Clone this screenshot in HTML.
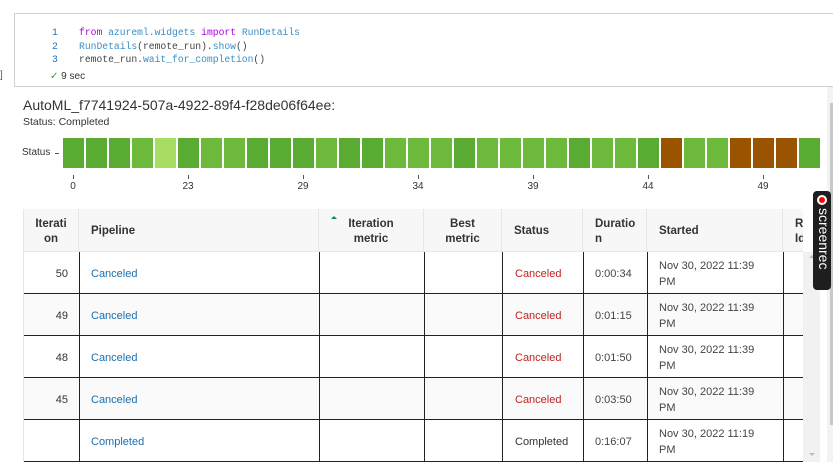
<!DOCTYPE html>
<html><head><meta charset="utf-8"><style>
*{margin:0;padding:0;box-sizing:border-box}
body{width:833px;height:462px;overflow:hidden;background:#fff;font-family:"Liberation Sans",sans-serif;position:relative;color:#333}
.a{position:absolute}
.code{font-family:"Liberation Mono",monospace;font-size:9.7px;color:#444;white-space:pre}
.ln{color:#1a73c0}
.kw{color:#af00db}
.fn{color:#3b8fc4}
.bar{position:absolute;top:138px;width:20.5px;height:30px}
.d{background:#5aab32}.m{background:#6db93c}.l{background:#a8dd64}.b{background:#9a5400}
.tk{position:absolute;top:175px;width:1px;height:4px;background:#555}
.tl{position:absolute;top:181px;font-size:10px;color:#333;width:30px;text-align:center}
.hd{position:absolute;top:209px;height:43px;padding-top:3px;background:#f7f7f7;border-right:1px solid #e6e6e6;border-bottom:1px solid #e6e6e6;font-size:11.5px;font-weight:bold;color:#333;display:flex;align-items:center;line-height:15px}
.cell{position:absolute;font-size:11px;height:42px;padding-top:2px;display:flex;align-items:center;line-height:16px}
.lk{color:#1a6fb0}.rd{color:#c0221f}
</style></head><body>
<div class="a" style="left:14px;top:13px;width:819px;height:74px;border-top:1px solid #d0d0d0;border-bottom:1px solid #d0d0d0;border-left:1px solid #d0d0d0"></div>
<div class="a" style="left:0;top:70px;font-size:10px;color:#555">]</div>
<div class="a code" style="left:52px;top:26px;line-height:13.5px"><span class="ln">1</span>
<span class="ln">2</span>
<span class="ln">3</span></div>
<div class="a code" style="left:79px;top:26px;line-height:13.5px"><span class="kw">from</span> <span class="fn">azureml.widgets</span> <span class="kw">import</span> <span class="fn">RunDetails</span>
<span class="fn">RunDetails</span>(remote_run).<span class="fn">show</span>()
remote_run.<span class="fn">wait_for_completion</span>()</div>
<div class="a" style="left:50px;top:71px;font-size:10px;color:#333"><span style="color:#2e9d3a">✓</span> 9 sec</div>
<div class="a" style="left:23px;top:97px;font-size:14px;color:#333">AutoML_f7741924-507a-4922-89f4-f28de06f64ee:</div>
<div class="a" style="left:23px;top:116px;font-size:10.5px;color:#333">Status: Completed</div>
<div class="a" style="left:22px;top:147px;font-size:10px;color:#333">Status</div>
<div class="a" style="left:55px;top:153px;width:4px;height:1px;background:#555"></div>
<div id="bars"></div>
<div class="a" style="left:23px;top:209px;width:780px;height:253px;background:#fff"></div>
<div class="hd" style="left:23px;width:56px;justify-content:center;text-align:center;border-left:1px solid #e6e6e6">Iterati<br>on</div>
<div class="hd" style="left:79px;width:240px;padding-left:12px">Pipeline</div>
<div class="hd" style="left:319px;width:105px;justify-content:center;text-align:center">Iteration<br>metric</div>
<div class="a" style="left:331px;top:216px;width:0;height:0;border-left:3px solid transparent;border-right:3px solid transparent;border-bottom:3px solid #138a5c"></div>
<div class="hd" style="left:424px;width:78px;justify-content:center;text-align:center">Best<br>metric</div>
<div class="hd" style="left:502px;width:81px;padding-left:12px">Status</div>
<div class="hd" style="left:583px;width:64px;padding-left:12px">Duratio<br>n</div>
<div class="hd" style="left:647px;width:136px;padding-left:12px">Started</div>
<div class="hd" style="left:783px;width:20px;padding-left:12px;overflow:hidden;border-right:none;white-space:nowrap">R<br>Id</div>
<div id="rows"></div>
<div class="a" style="left:803px;top:252px;width:17px;height:210px;background:#f1f1f1"></div>
<div class="a" style="left:809px;top:255px;width:0;height:0;border-left:3px solid transparent;border-right:3px solid transparent;border-bottom:3px solid #bbb"></div>
<div class="a" style="left:809px;top:453px;width:0;height:0;border-left:3px solid transparent;border-right:3px solid transparent;border-top:3px solid #bbb"></div>
<div class="a" style="left:827px;top:87px;width:6px;height:375px;background:#f3f3f3"></div>
<div class="a" style="left:830px;top:103px;width:3px;height:322px;background:#c8c8c8"></div>
<div class="a" style="left:813px;top:191px;width:18px;height:99px;background:#1e1e1e;border-radius:4px"></div>
<div class="a" style="left:817px;top:195px;width:10px;height:10px;background:#f00;border-radius:50%;border:2px solid #fff"></div>
<div class="a" style="top:208px;transform:rotate(90deg);transform-origin:0 0;color:#fff;font-size:14px;white-space:nowrap;line-height:1;left:831px">screenrec</div>
<script>
var c="d d d m l d m m d d d m d d m m m d m m m m d m m d b m m b b b d".split(" ");
var h="";
for(var i=0;i<33;i++){h+='<div class="bar '+c[i]+'" style="left:'+(63+i*23).toFixed(1)+'px"></div>';}
var lb=["0","23","29","34","39","44","49"];
for(var j=0;j<7;j++){var x=73+j*5*23;h+='<div class="tk" style="left:'+x.toFixed(0)+'px"></div><div class="tl" style="left:'+(x-15).toFixed(0)+'px">'+lb[j]+'</div>';}
document.getElementById("bars").innerHTML=h;
var r=[["50","Canceled","Canceled","0:00:34","Nov 30, 2022 11:39"],["49","Canceled","Canceled","0:01:15","Nov 30, 2022 11:39"],["48","Canceled","Canceled","0:01:50","Nov 30, 2022 11:39"],["45","Canceled","Canceled","0:03:50","Nov 30, 2022 11:39"],["","Completed","Completed","0:16:07","Nov 30, 2022 11:19"]];
var s="";
for(var k=0;k<5;k++){var y=252+k*42;var bg=(k%2==1)?"#fafafa":"#fff";
s+='<div class="a" style="left:23px;top:'+y+'px;width:780px;height:42px;background:'+bg+';border-bottom:1px solid #222"></div>';
s+='<div class="cell" style="left:23px;top:'+y+'px;width:45px;justify-content:flex-end">'+r[k][0]+'</div>';
s+='<div class="cell lk" style="left:91px;top:'+y+'px">'+r[k][1]+'</div>';
s+='<div class="cell '+(r[k][2]=="Canceled"?"rd":"")+'" style="left:515px;top:'+y+'px">'+r[k][2]+'</div>';
s+='<div class="cell" style="left:595px;top:'+y+'px;color:#444">'+r[k][3]+'</div>';
s+='<div class="cell" style="left:659px;top:'+y+'px;color:#444">'+r[k][4]+'<br>PM</div>';}
[79,319,424,502,583,647,783].forEach(function(x){s+='<div class="a" style="left:'+x+'px;top:252px;width:1px;height:210px;background:#222"></div>';});
s+='<div class="a" style="left:23px;top:252px;width:1px;height:210px;background:#e6e6e6"></div>';
document.getElementById("rows").innerHTML=s;
</script>
</body></html>
